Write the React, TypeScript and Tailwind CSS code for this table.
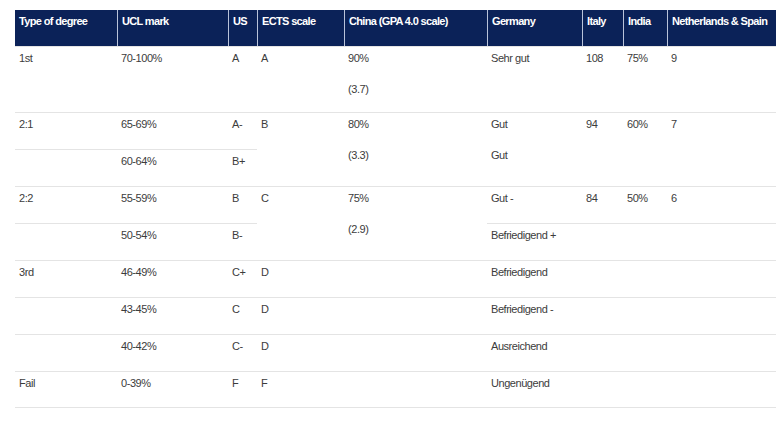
import React from "react";

type C = { t?: string | string[]; span?: boolean; last?: boolean };

const headers = [
  "Type of degree",
  "UCL mark",
  "US",
  "ECTS scale",
  "China (GPA 4.0 scale)",
  "Germany",
  "Italy",
  "India",
  "Netherlands & Spain",
];

const rows: C[][] = [
  [{ t: "1st" }, { t: "70-100%" }, { t: "A" }, { t: "A" }, { t: ["90%", "(3.7)"] }, { t: "Sehr gut" }, { t: "108" }, { t: "75%" }, { t: "9" }],
  [{ t: "2:1" }, { t: "65-69%" }, { t: "A-" }, { t: "B", span: true }, { t: ["80%", "(3.3)"], span: true }, { t: ["Gut", "Gut"], span: true }, { t: "94", span: true }, { t: "60%", span: true }, { t: "7", span: true }],
  [{ t: "" }, { t: "60-64%" }, { t: "B+" }],
  [{ t: "2:2" }, { t: "55-59%" }, { t: "B" }, { t: "C", span: true }, { t: ["75%", "(2.9)"], span: true }, { t: "Gut -" }, { t: "84" }, { t: "50%" }, { t: "6" }],
  [{ t: "" }, { t: "50-54%" }, { t: "B-" }, { t: "Befriedigend +" }, { t: "" }, { t: "" }, { t: "" }],
  [{ t: "3rd" }, { t: "46-49%" }, { t: "C+" }, { t: "D" }, { t: "" }, { t: "Befriedigend" }, { t: "" }, { t: "" }, { t: "" }],
  [{ t: "" }, { t: "43-45%" }, { t: "C" }, { t: "D" }, { t: "" }, { t: "Befriedigend -" }, { t: "" }, { t: "" }, { t: "" }],
  [{ t: "" }, { t: "40-42%" }, { t: "C-" }, { t: "D" }, { t: "" }, { t: "Ausreichend" }, { t: "" }, { t: "" }, { t: "" }],
  [{ t: "Fail", last: true }, { t: "0-39%", last: true }, { t: "F", last: true }, { t: "F", last: true }, { t: "", last: true }, { t: "Ungenügend", last: true }, { t: "", last: true }, { t: "", last: true }, { t: "", last: true }],
];

function Cell({ c }: { c: C }) {
  const lines = Array.isArray(c.t) ? c.t : [c.t ?? ""];
  return (
    <div
      className={
        "border-t border-[#e4e4e4] px-[4px] pt-[4px] text-[11px] tracking-[-0.45px] leading-[15px] text-[#3c3c3c] whitespace-nowrap " +
        (c.span ? "row-span-2 " : "") +
        (c.last ? "border-b" : "")
      }
    >
      {lines.map((l, i) => (
        <div key={i} className={i > 0 ? "mt-[16px]" : ""}>
          {l}
        </div>
      ))}
    </div>
  );
}

export default function App() {
  return (
    <div
      className="w-[783px] h-[434px] bg-white pt-[10px] pl-[15px]"
      style={{ fontFamily: '"Liberation Sans", Arial, sans-serif' }}
    >
      <div className="grid grid-cols-[102px_111px_29px_87px_143px_95px_41px_44px_109px] grid-rows-[36px_66px_repeat(8,37px)]">
        {headers.map((h, i) => (
          <div
            key={h}
            className={
              "bg-[#0b2258] text-white font-bold text-[11px] tracking-[-0.65px] leading-[15px] px-[4px] pt-[4px] whitespace-nowrap " +
              (i > 0 ? "border-l border-[#b9c3da]" : "")
            }
          >
            {h}
          </div>
        ))}
        {rows.map((r, ri) => r.map((c, ci) => <Cell key={ri + "-" + ci} c={c} />))}
      </div>
    </div>
  );
}
